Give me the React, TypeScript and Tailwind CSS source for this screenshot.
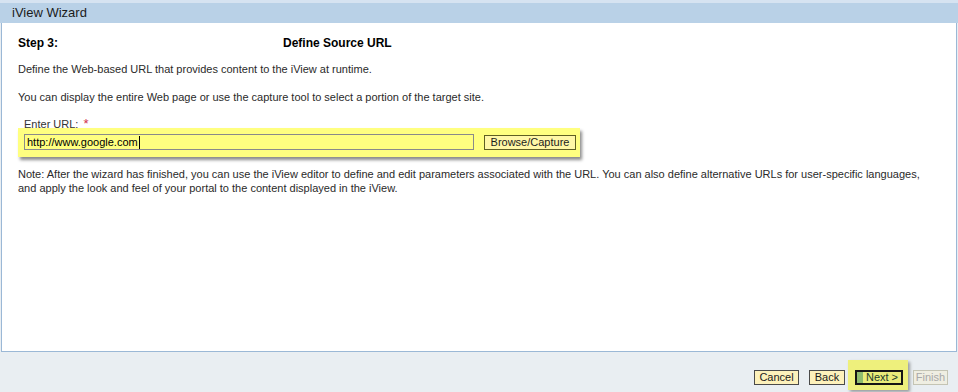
export default function App() {
  return (
    <div className="w-[958px] h-[392px] flex flex-col bg-[#e9eef2] font-['Liberation_Sans',Arial,sans-serif] text-[#2a2a2a] overflow-hidden">
      {/* top strip + title bar */}
      <div className="h-[3px] bg-[#d6e3f1]" />
      <div className="h-[20px] bg-[#b9d1e7] pl-[12px] flex items-center text-[13px] text-[#1b1b1b]">
        iView Wizard
      </div>

      {/* content panel */}
      <div className="h-[329px] ml-px mr-px bg-white border-l border-r border-b border-[#9bb8d6] pl-[16px] pt-[12px]">
        <div className="flex h-[16px] items-center text-[12px] font-bold text-black">
          <div className="w-[265px]">Step 3:</div>
          <div>Define Source URL</div>
        </div>

        <p className="mt-[11px] text-[11px] leading-[14px]">
          Define the Web-based URL that provides content to the iView at runtime.
        </p>
        <p className="mt-[14px] text-[11px] leading-[14px]">
          You can display the entire Web page or use the capture tool to select a portion of the target site.
        </p>

        <div className="mt-[14px] pl-[6px] text-[11px] leading-[12px] text-[#333]">
          Enter URL: <span className="text-[13px] text-[#d0304a] ml-[2px]">*</span>
        </div>
        <div className="relative mt-[-2px] w-[562px] h-[29px] bg-[#ffff80] shadow-[2px_3px_3px_rgba(0,0,0,0.45)] flex items-start pt-[6px] pl-[6px] gap-[10px]">
          <div className="w-[450px] h-[16px] border border-[#8a8a8a] flex items-center pl-[2px] text-[11px] text-black">
            http://www.google.com
            <span className="inline-block w-px h-[13px] bg-black ml-px" />
          </div>
          <div className="mt-px w-[92px] h-[15px] border border-[#5e5e22] bg-[#fff7a6] flex items-center justify-center text-[11px] text-[#1c1c1c]">
            Browse/Capture
          </div>
        </div>

        <p className="mt-[10px] pr-[26px] text-[11px] leading-[14px]">
          Note: After the wizard has finished, you can use the iView editor to define and edit parameters associated with the URL. You can also define alternative URLs for user-specific languages, and apply the look and feel of your portal to the content displayed in the iView.
        </p>
      </div>

      {/* footer buttons */}
      <div className="flex-1 flex items-end justify-end pr-[10px] pb-[2px]">
        <div className="mb-[5px] w-[45px] h-[15px] border border-[#4a4a4a] bg-[#fdf1bb] flex items-center justify-center text-[11px] text-[#1c1c1c]">
          Cancel
        </div>
        <div className="ml-[10px] mb-[5px] w-[36px] h-[15px] border border-[#4a4a4a] bg-[#fdf1bb] flex items-center justify-center text-[11px] text-[#1c1c1c]">
          Back
        </div>
        <div className="ml-[3px] w-[60px] h-[30px] bg-[#eef07c] shadow-[2px_2px_3px_rgba(0,0,0,0.35)] pl-[7px] pt-[10px]">
          <div className="w-[48px] h-[15px] border-2 border-[#151515] bg-[#e9ec7a] flex items-stretch text-[11px] text-[#1d3b2a]">
            <div className="w-[6px] bg-[#8fbc6f]" />
            <div className="flex-1 flex items-center justify-center leading-none">Next &gt;</div>
          </div>
        </div>
        <div className="ml-[5px] mb-[5px] w-[35px] h-[15px] border border-[#c4c4b4] bg-[#efeee2] flex items-center justify-center text-[11px] text-[#a8a8a8]">
          Finish
        </div>
      </div>
    </div>
  );
}
